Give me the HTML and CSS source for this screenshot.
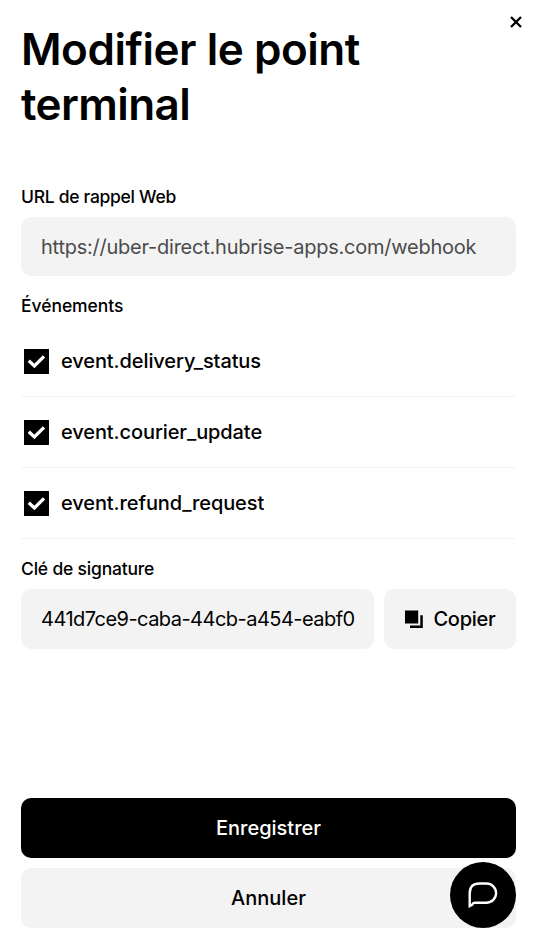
FILE: index.html
```html
<!DOCTYPE html>
<html lang="fr">
<head>
<meta charset="utf-8">
<title>Modifier le point terminal</title>
<link rel="stylesheet" href="styles.css">
</head>
<body>
<main class="dialog">
  <button class="close" aria-label="Fermer"><svg width="12" height="12" viewBox="0 0 12 12"><path d="M1 1 11 11M11 1 1 11" stroke="#000" stroke-width="2.3"/></svg></button>
  <h1 class="title"><span class="t-one">Modifier le point</span><br><span class="t-two">terminal</span></h1>
  <div class="label"><span class="l-url">URL de rappel Web</span></div>
  <div class="field url"><span class="v-url">https://uber-direct.hubrise-apps.com/webhook</span></div>
  <div class="label events-label"><span class="l-events">Événements</span></div>
  <div class="events">
    <label class="event"><span class="check"><svg width="25" height="25" viewBox="0 0 25 25"><path d="M4.8 11.8 10.4 17 20 7.4" fill="none" stroke="#fff" stroke-width="3.3"/></svg></span><span class="e-text">event.delivery_status</span></label>
    <label class="event"><span class="check"><svg width="25" height="25" viewBox="0 0 25 25"><path d="M4.8 11.8 10.4 17 20 7.4" fill="none" stroke="#fff" stroke-width="3.3"/></svg></span><span class="e-text">event.courier_update</span></label>
    <label class="event"><span class="check"><svg width="25" height="25" viewBox="0 0 25 25"><path d="M4.8 11.8 10.4 17 20 7.4" fill="none" stroke="#fff" stroke-width="3.3"/></svg></span><span class="e-text">event.refund_request</span></label>
  </div>
  <div class="label key-label"><span class="l-key">Clé de signature</span></div>
  <div class="key-row">
    <div class="field key"><span class="v-key">441d7ce9-caba-44cb-a454-eabf0</span></div>
    <button class="button copy"><svg width="18" height="18" viewBox="0 0 18 18"><path d="M0 .5h13.2v13H0zM15.3 5.2H17.8V18H5v-2.5h10.3z"/></svg><span class="b-copy">Copier</span></button>
  </div>
  <div class="actions">
    <button class="button primary"><span class="b-save">Enregistrer</span></button>
    <button class="button"><span class="b-cancel">Annuler</span></button>
  </div>
  <button class="chat" aria-label="Discussion"><svg width="30" height="26" viewBox="0 0 30 26"><path d="M1.7 24V11.5Q1.7 1.5 11.5 1.5H18.5A9.5 9.5 0 0 1 18.5 20.7H6.8Q4.8 20.8 4.3 22.6L1.7 24Z" fill="none" stroke="#fff" stroke-width="2.4"/></svg></button>
</main>
</body>
</html>
```
FILE: styles.css
```css
* { box-sizing: border-box; }
body { margin: 0; background: #fff; color: #000; font-family: Inter, sans-serif; }
button { border: 0; padding: 0; font: inherit; color: inherit; }
svg { display: block; flex: none; }
.dialog { position: relative; height: 946px; padding: 22px 27px 18px 21px; display: flex; flex-direction: column; overflow: hidden; }
.close { position: absolute; left: 510px; top: 16px; background: none; }
.title { margin: 0; height: 110px; font-size: 44px; line-height: 55px; font-weight: 600; white-space: nowrap; }
.t-one { letter-spacing: -0.46px; }
.t-two { letter-spacing: -0.6px; }
.label { margin-top: 52px; height: 25px; line-height: 25px; font-size: 17.5px; font-weight: 500; white-space: nowrap; }
.l-url { letter-spacing: -0.3px; }
.l-events { letter-spacing: -0.05px; }
.l-key { letter-spacing: -0.2px; }
.field { display: flex; align-items: center; height: 60px; padding: 0 20px; border-radius: 10px; background: #f3f3f3; font-size: 20px; white-space: nowrap; }
.url { height: 59px; margin-top: 8px; color: #4b4b4b; }
.v-url { letter-spacing: -0.235px; }
.v-key { letter-spacing: -0.53px; }
.events-label { margin-top: 17px; }
.events { margin-top: 8px; }
.event { display: flex; align-items: center; gap: 12px; height: 71px; padding: 0 3px; border-bottom: 1px solid #f3f3f3; font-size: 20px; font-weight: 500; }
.e-text { letter-spacing: -0.1px; }
.check { width: 25px; height: 25px; background: #000; }
.key-label { margin-top: 17px; }
.key-row { display: grid; grid-template-columns: 353px 132px; gap: 10px; margin-top: 8px; }
.button { display: flex; align-items: center; justify-content: center; height: 60px; border-radius: 10px; background: #f3f3f3; font-size: 20px; font-weight: 500; white-space: nowrap; }
.copy { gap: 10px; padding-left: 1px; }
.b-copy { letter-spacing: -0.25px; }
.b-cancel { letter-spacing: 0; }
.actions { display: flex; flex-direction: column; gap: 10px; margin-top: auto; }
.primary { background: #000; color: #fff; }
.chat { position: absolute; left: 450px; top: 862px; width: 66px; height: 66px; border-radius: 50%; background: #000; display: flex; align-items: center; justify-content: center; }
```
